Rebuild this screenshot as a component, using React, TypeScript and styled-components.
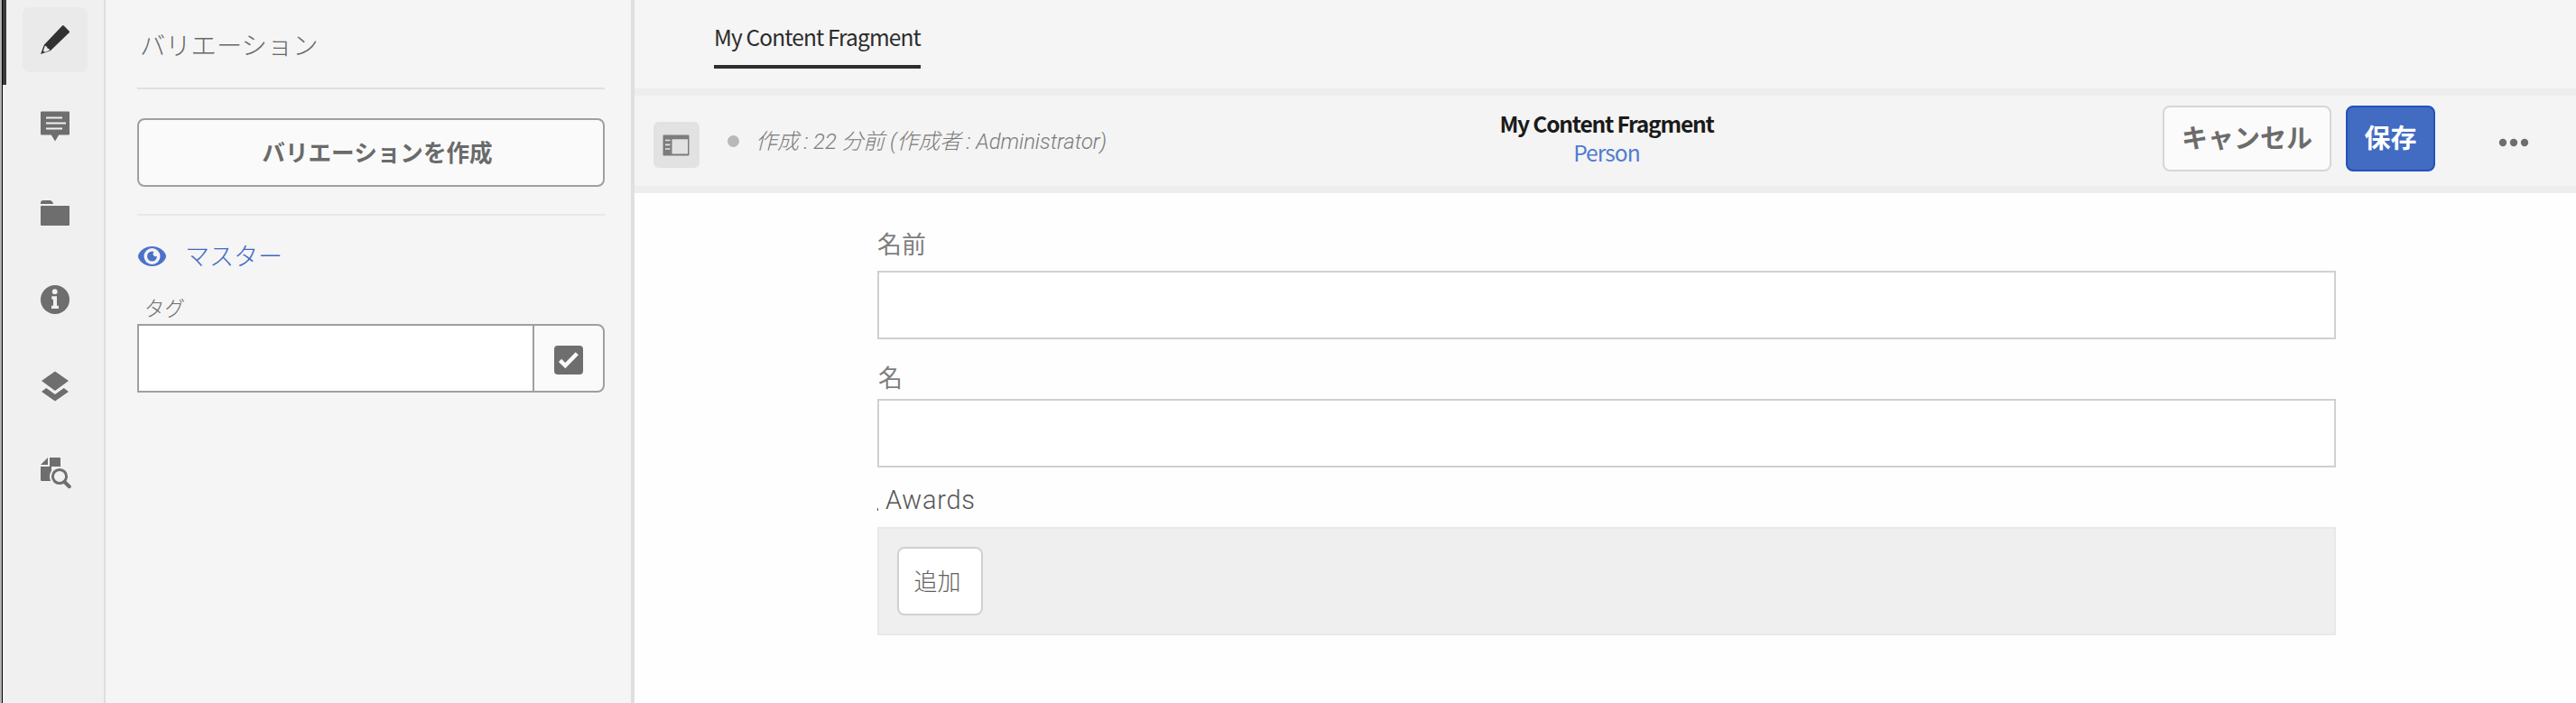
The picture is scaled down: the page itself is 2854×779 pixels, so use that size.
import React from 'react';
import styled, { createGlobalStyle } from 'styled-components';

const jp = `'Noto Sans CJK JP', sans-serif`;

const Global = createGlobalStyle`
  *, *::before, *::after { box-sizing: border-box; }
  html, body { margin: 0; padding: 0; }
  body { background: #fff; font-family: ${jp}; overflow: hidden; }
  button, input { font-family: inherit; margin: 0; padding: 0; outline: none; }
`;

const Shell = styled.div`
  display: flex;
  width: 2854px;
  height: 779px;
  overflow: hidden;
  background: #fefefe;
`;

const WindowEdge = styled.div`
  flex: none;
  width: 3px;
  background: #b2b2b2;
  border-right: 1px solid #000;
`;

const Rail = styled.nav`
  flex: none;
  display: flex;
  flex-direction: column;
  width: 114px;
  background: #f0f0f0;
  border-right: 2px solid #dfdfdf;
`;

const RailItem = styled.div<{ $active?: boolean }>`
  flex: none;
  display: flex;
  height: ${p => (p.$active ? 94 : 96)}px;
  padding: ${p => (p.$active ? '8px 0 0 18px' : '0 0 0 22px')};
  border-left: ${p => (p.$active ? '4px solid #3a3a3a' : '0')};
`;

const RailButton = styled.button<{ $active?: boolean }>`
  display: flex;
  align-items: center;
  justify-content: center;
  width: 72px;
  height: 72px;
  border: 0;
  border-radius: 8px;
  background: ${p => (p.$active ? '#eaeaea' : 'transparent')};
`;

const RailList = styled.div`
  padding-top: 10px;
`;

const Panel = styled.aside`
  flex: none;
  width: 586px;
  padding: 0 29px 0 35px;
  background: #f5f5f5;
  border-right: 4px solid #dfdfdf;
`;

const PanelTitle = styled.div`
  height: 99px;
  padding: 29px 0 0 3px;
  border-bottom: 2px solid #e0e0e0;
  font-size: 28.3px;
  font-weight: 300;
  line-height: 40px;
  color: #686868;
`;

const PanelSection = styled.div`
  height: 140px;
  padding-top: 32px;
  border-bottom: 2px solid #e8e8e8;
`;

const CreateButton = styled.button`
  display: block;
  width: 518px;
  height: 76px;
  padding: 0 0 3px 14px;
  border: 2px solid #9f9f9f;
  border-radius: 8px;
  background: #fafafa;
  font-size: 25.6px;
  font-weight: 700;
  color: #6a6a6a;
`;

const MasterRow = styled.div`
  display: flex;
  align-items: center;
  gap: 20px;
  height: 90px;
  font-size: 27px;
  font-weight: 300;
  line-height: 40px;
  color: #3f69c4;
`;

const MasterName = styled.span`
  padding-bottom: 2px;
`;

const TagLabel = styled.div`
  height: 30px;
  padding-left: 8px;
  margin-top: -3px;
  font-size: 22.5px;
  font-weight: 300;
  line-height: 28px;
  color: #6e6e6e;
`;

const TagField = styled.div`
  display: flex;
  height: 76px;
  margin-top: 3px;
`;

const TagInput = styled.input`
  width: 438px;
  border: 2px solid #9f9f9f;
  border-right: 0;
  border-radius: 0;
  background: #fff;
`;

const TagPicker = styled.button`
  display: flex;
  align-items: center;
  justify-content: center;
  width: 80px;
  padding-top: 4px;
  border: 2px solid #9f9f9f;
  border-radius: 0 8px 8px 0;
  background: #fafafa;
`;

const Main = styled.main`
  flex: 1;
  display: flex;
  flex-direction: column;
`;

const TabBar = styled.div`
  height: 106px;
  padding-left: 88px;
  background: #f5f5f5;
  border-bottom: 8px solid #ededed;
`;

const Tab = styled.div`
  width: 229px;
  height: 76px;
  padding-top: 24px;
  border-bottom: 4px solid #2e2e2e;
  font-size: 24.5px;
  line-height: 34px;
  letter-spacing: -0.88px;
  white-space: nowrap;
  color: #2c2c2c;
`;

const Toolbar = styled.div`
  display: grid;
  grid-template-columns: 1fr auto 1fr;
  height: 108px;
  background: #f4f4f4;
  border-bottom: 8px solid #ededed;
`;

const Status = styled.div`
  display: flex;
  align-items: flex-start;
  padding: 29px 0 0 21px;
`;

const ToggleButton = styled.button`
  display: flex;
  align-items: center;
  justify-content: center;
  width: 51px;
  height: 51px;
  padding-right: 2px;
  border: 0;
  border-radius: 6px;
  background: #e2e2e2;
`;

const StatusDot = styled.span`
  width: 13px;
  height: 13px;
  margin: 15px 0 0 31px;
  border-radius: 50%;
  background: #b8b8b8;
`;

const StatusText = styled.span`
  margin: 5px 0 0 18px;
  font-family: Roboto, ${jp};
  font-size: 24px;
  font-style: italic;
  font-weight: 300;
  line-height: 34px;
  letter-spacing: -0.1px;
  white-space: nowrap;
  color: #7c7c7c;
`;

const Heading = styled.div`
  padding-top: 15px;
  margin-left: 3px;
  text-align: center;
  white-space: nowrap;
`;

const Title = styled.div`
  font-size: 24.5px;
  font-weight: 700;
  line-height: 32px;
  letter-spacing: -1.2px;
  color: #1a1a1a;
`;

const Subtitle = styled.div`
  font-size: 24.5px;
  line-height: 32px;
  letter-spacing: -0.9px;
  color: #507bd0;
`;

const Actions = styled.div`
  display: flex;
  align-items: flex-start;
  justify-content: flex-end;
  padding: 11px 52px 0 0;
`;

const ActionButton = styled.button<{ $primary?: boolean }>`
  width: ${p => (p.$primary ? 99 : 187)}px;
  height: 73px;
  margin-left: ${p => (p.$primary ? 16 : 0)}px;
  padding-bottom: 5px;
  border: 2px solid ${p => (p.$primary ? '#2352bb' : '#d6d6d6')};
  border-radius: 8px;
  background: ${p => (p.$primary ? '#426bc2' : '#fbfbfb')};
  font-size: 29px;
  font-weight: 700;
  line-height: 40px;
  white-space: nowrap;
  color: ${p => (p.$primary ? '#fff' : '#6c6c6c')};
`;

const MoreButton = styled.button`
  display: flex;
  margin: 36px 0 0 70px;
  border: 0;
  background: transparent;
`;

const Form = styled.div`
  width: 1616px;
  margin-left: 269px;
`;

const Label = styled.label<{ $h: number; $top: number; $indent?: number }>`
  display: block;
  height: ${p => p.$h}px;
  padding: ${p => p.$top}px 0 0 ${p => p.$indent || 0}px;
  font-size: 27px;
  font-weight: 400;
  line-height: 40px;
  color: #7e7e7e;
`;

const AwardsLabel = styled.div`
  display: flex;
  height: 66px;
  padding-top: 16px;
  font-family: Roboto, 'Noto Sans CJK JP', sans-serif;
  font-size: 29px;
  font-weight: 300;
  line-height: 40px;
  letter-spacing: 0.7px;
  color: #555;
`;

const Mark = styled.span`
  width: 1px;
  height: 3px;
  margin: 29px 8px 0 0;
  background: #555;
`;

const TextInput = styled.input`
  display: block;
  width: 100%;
  height: 76px;
  border: 2px solid #d0d0d0;
  border-radius: 0;
  background: #fff;
`;

const Multifield = styled.div`
  height: 120px;
  padding: 20px;
  border: 2px solid #e8e8e8;
  background: #efefef;
`;

const AddButton = styled.button`
  width: 95px;
  height: 76px;
  padding: 0 6px 3px 0;
  border: 2px solid #d0d0d0;
  border-radius: 8px;
  background: #fff;
  font-size: 26px;
  font-weight: 300;
  color: #606060;
`;

const G = '#6e6e6e';

const PencilIcon = () => (
  <svg width="32" height="32" viewBox="0 0 32 32">
    <path d="M24 .6a1.200 1.200 0 0 1 1.800 0l5.800 5.800a1.200 1.200 0 0 1 0 1.800L10.800 28.300 4 21.400z" fill="#323232" />
    <path d="M4 21.200L10.800 28.300 0 32z" fill="#323232" />
    <path d="M4.800 22.800l1.800.6 1 2.200 2 .8.400 1.400-5.200 2-1.900-1.400z" fill="#eaeaea" />
  </svg>
);

const CommentIcon = () => (
  <svg width="32" height="34" viewBox="0 0 32 34">
    <path d="M1 0.5h30a1 1 0 0 1 1 1v24a1 1 0 0 1-1 1H20.2L16 33.5 11.8 26.500H1a1 1 0 0 1-1-1v-24a1 1 0 0 1 1-1z" fill={G} />
    <path d="M6 7.500h18M6 13.500h22M6 19.500h18" stroke="#f0f0f0" strokeWidth="2" />
  </svg>
);

const FolderIcon = () => (
  <svg width="32" height="32" viewBox="0 0 32 32">
    <path d="M0 6V5a3 3 0 0 1 3-3h7.500q1.500 0 2.500 1.500L14.200 6z" fill={G} />
    <rect y="8" width="32" height="22" rx="1" fill={G} />
  </svg>
);

const InfoIcon = () => (
  <svg width="32" height="32" viewBox="0 0 32 32">
    <circle cx="16" cy="16" r="16" fill={G} />
    <circle cx="15.700" cy="7.200" r="2.900" fill="#f0f0f0" />
    <path d="M12.300 12.300H18v10.500h2V26h-8v-3.200h2v-7h-1.700z" fill="#f0f0f0" />
  </svg>
);

const LayersIcon = () => (
  <svg width="32" height="34" viewBox="0 0 32 34">
    <path d="M16 .5L31 11 16 22 1 11z" fill={G} />
    <path d="M1 23L6.300 19 16 26 25.700 19 31 23 16 33.500z" fill={G} />
  </svg>
);

const SearchDocIcon = () => (
  <svg width="36" height="36" viewBox="-2 -1 36 36">
    <path d="M8 0v8H0z" fill={G} />
    <path d="M10 0h11a1 1 0 0 1 1 1v9H12V26H1a1 1 0 0 1-1-1V10h10z" fill={G} />
    <circle cx="21" cy="21" r="11" fill="#f0f0f0" />
    <circle cx="21" cy="21" r="7.600" fill="none" stroke={G} strokeWidth="3" />
    <path d="M26.500 27L31.800 32.200" stroke={G} strokeWidth="4" strokeLinecap="round" />
  </svg>
);

const EyeIcon = () => (
  <svg width="33" height="24" viewBox="0 0 33 24">
    <path d="M16.500 1C8 1 1 7.500 1 12s7 11 15.500 11S32 16.500 32 12 25 1 16.500 1z" fill="#4a72c8" />
    <circle cx="16.500" cy="12" r="9" fill="#f5f5f5" />
    <path d="M16.500 6.500a5.500 5.500 0 1 0 5.500 5.500 4 4 0 0 1-4-1 3.200 3.200 0 0 1 .5-4.100 5.500 5.500 0 0 0-2-.4z" fill="#4a72c8" />
  </svg>
);

const CheckIcon = () => (
  <svg width="32" height="32" viewBox="0 0 32 32">
    <rect width="32" height="32" rx="4" fill={G} />
    <path d="M6.500 16.300L12.300 22 25.300 8.700" stroke="#fafafa" strokeWidth="4.500" fill="none" />
  </svg>
);

const PanelIcon = () => (
  <svg width="30" height="24" viewBox="0 0 30 24">
    <rect x=".5" y=".5" width="29" height="23" rx="1" fill="#7c7c7c" />
    <rect x="10.500" y="5.300" width="17.500" height="16.200" fill="#e2e2e2" />
    <path d="M3 6.500h5.500M3 11.300h5.500M3 16h5.500" stroke="#e2e2e2" strokeWidth="1.700" />
  </svg>
);

const MoreIcon = () => (
  <svg width="34" height="10" viewBox="0 0 34 10">
    {[5, 17, 29].map(x => (
      <circle key={x} cx={x} cy="5" r="4.200" fill={G} />
    ))}
  </svg>
);

export default function App() {
  return (
    <>
      <Global />
      <Shell>
        <WindowEdge />
        <Rail>
          <RailItem $active>
            <RailButton $active><PencilIcon /></RailButton>
          </RailItem>
          <RailList>
            <RailItem><RailButton><CommentIcon /></RailButton></RailItem>
            <RailItem><RailButton><FolderIcon /></RailButton></RailItem>
            <RailItem><RailButton><InfoIcon /></RailButton></RailItem>
            <RailItem><RailButton><LayersIcon /></RailButton></RailItem>
            <RailItem><RailButton><SearchDocIcon /></RailButton></RailItem>
          </RailList>
        </Rail>
        <Panel>
          <PanelTitle>バリエーション</PanelTitle>
          <PanelSection>
            <CreateButton>バリエーションを作成</CreateButton>
          </PanelSection>
          <MasterRow>
            <EyeIcon />
            <MasterName>マスター</MasterName>
          </MasterRow>
          <TagLabel>タグ</TagLabel>
          <TagField>
            <TagInput />
            <TagPicker><CheckIcon /></TagPicker>
          </TagField>
        </Panel>
        <Main>
          <TabBar>
            <Tab>My Content Fragment</Tab>
          </TabBar>
          <Toolbar>
            <Status>
              <ToggleButton><PanelIcon /></ToggleButton>
              <StatusDot />
              <StatusText>作成 : 22 分前 (作成者 : Administrator)</StatusText>
            </Status>
            <Heading>
              <Title>My Content Fragment</Title>
              <Subtitle>Person</Subtitle>
            </Heading>
            <Actions>
              <ActionButton>キャンセル</ActionButton>
              <ActionButton $primary>保存</ActionButton>
              <MoreButton><MoreIcon /></MoreButton>
            </Actions>
          </Toolbar>
          <Form>
            <Label $h={86} $top={36}>名前</Label>
            <TextInput />
            <Label $h={66} $top={22} $indent={1}>名</Label>
            <TextInput />
            <AwardsLabel><Mark />Awards</AwardsLabel>
            <Multifield>
              <AddButton>追加</AddButton>
            </Multifield>
          </Form>
        </Main>
      </Shell>
    </>
  );
}
